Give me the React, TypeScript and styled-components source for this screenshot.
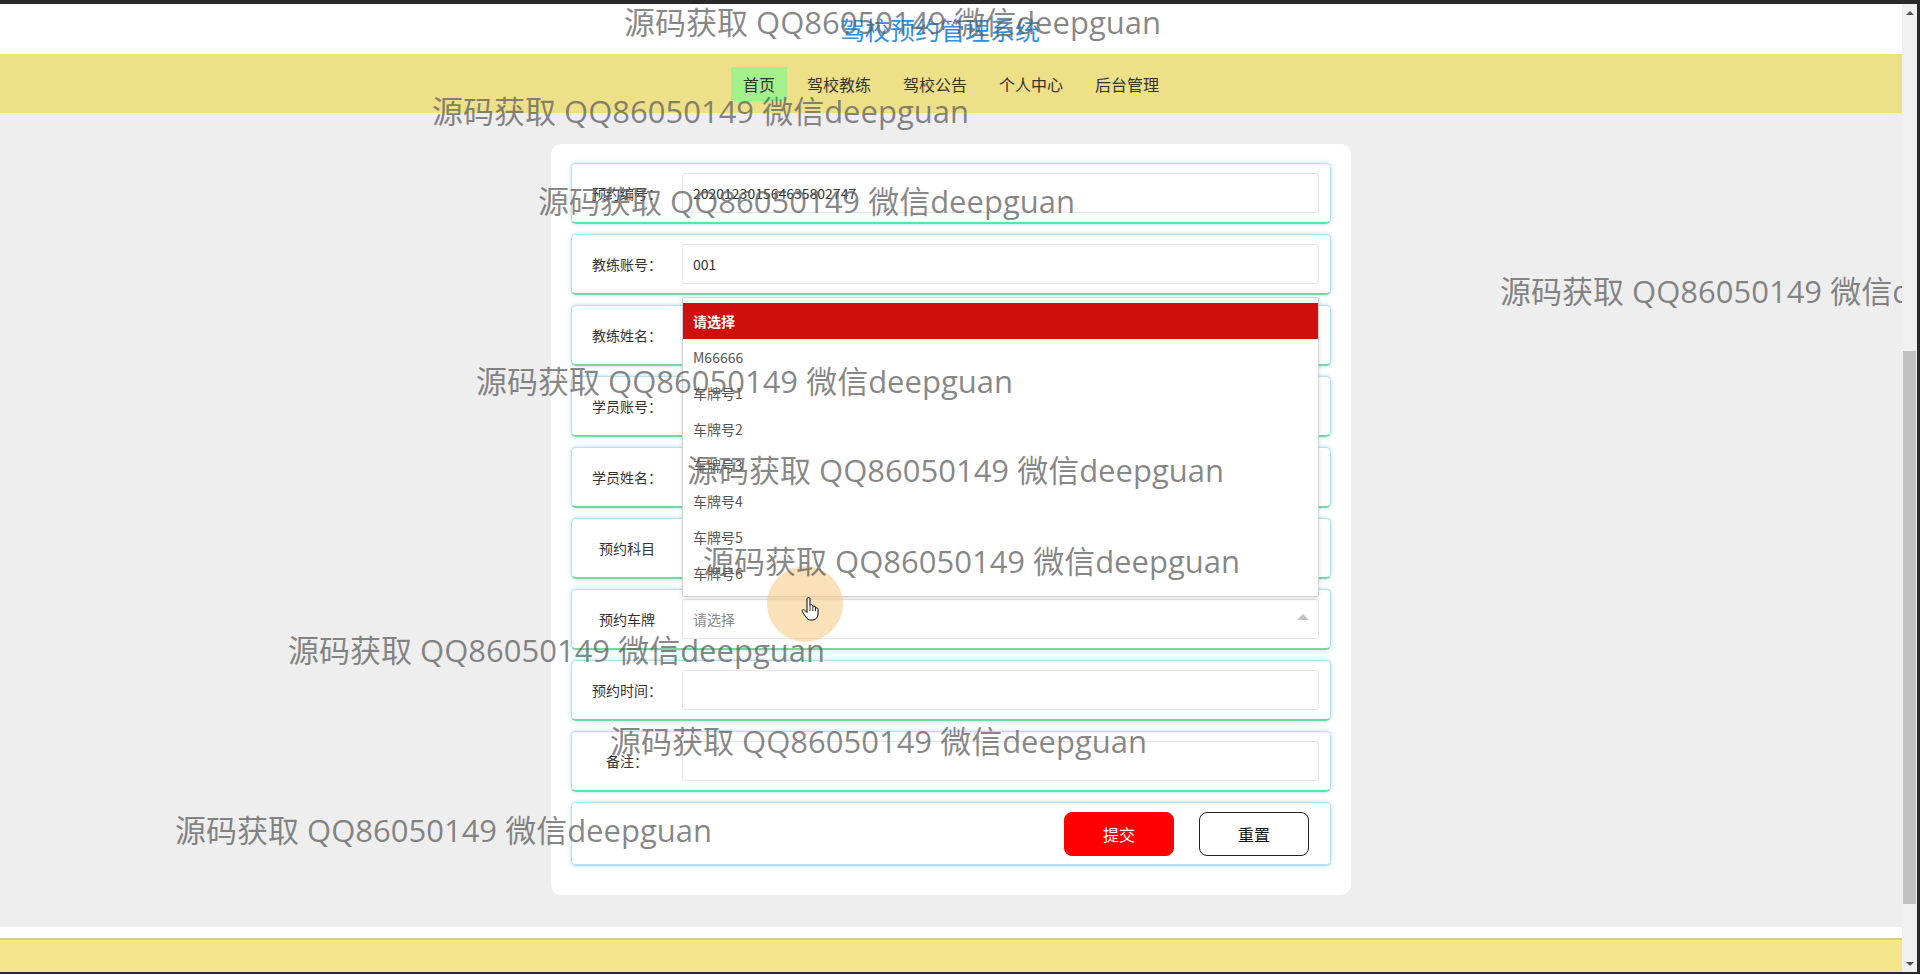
import React from 'react';
import styled, { createGlobalStyle } from 'styled-components';

const GlobalStyle = createGlobalStyle`
  html, body { margin: 0; padding: 0; height: 100%; overflow: hidden; }
  body { font-family: "Noto Sans CJK SC", "Noto Sans", sans-serif; background: #2a2a2a; }
  *, *::before, *::after { box-sizing: border-box; }
`;

const Frame = styled.div`
  height: 974px;
  display: flex;
  flex-direction: column;
  padding: 4px 0 2px;
  background: #2a2a2a;
`;

const Window = styled.div`
  flex: 1;
  display: flex;
  min-height: 0;
`;

const Page = styled.div`
  position: relative;
  flex: 1;
  display: flex;
  flex-direction: column;
  overflow: hidden;
  background: #eeeeee;
`;

const Header = styled.header`
  height: 50px;
  background: #fff;
  display: flex;
  justify-content: center;
  align-items: center;
`;

const Title = styled.h1`
  margin: 0 22px 0 0;
  font-size: 25px;
  font-weight: 400;
  line-height: 1;
  color: #2f8fe3;
`;

const Nav = styled.nav`
  height: 59px;
  background: #eedf89;
  display: flex;
  justify-content: center;
  align-items: center;
  gap: 8px;
`;

const NavItem = styled.a<{ $active?: boolean }>`
  padding: 0 12px;
  line-height: 34px;
  font-size: 16px;
  color: #333;
  text-decoration: none;
  background: ${p => (p.$active ? '#a4f08b' : 'transparent')};
`;

const Main = styled.main`
  flex: 1;
  display: flex;
  justify-content: center;
  align-items: flex-start;
  padding-top: 31px;
`;

const Card = styled.form`
  width: 800px;
  background: #fff;
  border-radius: 10px;
  padding: 19px 20px 29px;
  display: flex;
  flex-direction: column;
  gap: 10px;
`;

const Row = styled.div<{ $actions?: boolean }>`
  position: relative;
  height: ${p => (p.$actions ? 64 : 61)}px;
  display: flex;
  align-items: ${p => (p.$actions ? 'center' : 'flex-start')};
  justify-content: ${p => (p.$actions ? 'flex-end' : 'flex-start')};
  gap: ${p => (p.$actions ? '25px' : '0')};
  padding: ${p => (p.$actions ? '0 21px 0 0' : '9px 11px 0 0')};
  border: 1px solid #b6e1f3;
  border-bottom: 2px solid ${p => (p.$actions ? '#b6e1f3' : '#74d9a0')};
  border-radius: 5px;
  background: #fff;
  box-shadow: 0 0 4px rgba(120, 200, 235, 0.6);
`;

const FieldLabel = styled.label`
  width: 110px;
  flex: none;
  line-height: 40px;
  text-align: center;
  font-size: 14px;
  color: #333;
`;

const TextInput = styled.input`
  flex: 1;
  width: 100%;
  height: 40px;
  border: 1px solid #e6e6e6;
  border-radius: 3px;
  padding: 0 10px;
  font-family: inherit;
  font-size: 14px;
  color: #333;
  background: #fff;
  outline: none;
  &::placeholder { color: #888; }
`;

const SelectBox = styled.div`
  position: relative;
  flex: 1;
  display: flex;
`;

const SelectArrow = styled.span`
  position: absolute;
  right: 10px;
  top: 15px;
  width: 0;
  height: 0;
  border-left: 6px solid transparent;
  border-right: 6px solid transparent;
  border-bottom: 6px solid #c2c2c2;
`;

const Dropdown = styled.dl`
  position: absolute;
  left: 0;
  right: 0;
  bottom: 42px;
  margin: 0;
  padding: 5px 0;
  border: 1px solid #d2d2d2;
  border-radius: 2px;
  background: #fff;
  box-shadow: 0 2px 4px rgba(0, 0, 0, 0.12);
  z-index: 10;
`;

const Option = styled.dd<{ $selected?: boolean }>`
  margin: 0;
  padding: 0 10px;
  line-height: 36px;
  font-size: 14px;
  color: ${p => (p.$selected ? '#fff' : '#555')};
  font-weight: ${p => (p.$selected ? 700 : 400)};
  background: ${p => (p.$selected ? '#cf0f0c' : '#fff')};
`;

const Button = styled.button<{ $primary?: boolean }>`
  width: 110px;
  height: 44px;
  border-radius: 8px;
  font-family: inherit;
  font-size: 16px;
  cursor: pointer;
  color: ${p => (p.$primary ? '#fff' : '#111')};
  background: ${p => (p.$primary ? '#ff0000' : '#fff')};
  border: 1px solid ${p => (p.$primary ? '#ff0000' : '#222')};
`;

const FooterGap = styled.div`
  height: 11px;
  background: #fff;
`;

const FooterBar = styled.footer`
  height: 34px;
  background: #f5e68b;
  border-top: 2px solid #d5c99e;
`;

const Scrollbar = styled.div`
  width: 15px;
  flex: none;
  background: #f0f0f0;
  display: flex;
  flex-direction: column;
`;

const ScrollArrow = styled.div<{ $down?: boolean }>`
  height: 17px;
  flex: none;
  display: flex;
  justify-content: center;
  align-items: center;
  &::after {
    content: '';
    width: 0;
    height: 0;
    border-left: 4px solid transparent;
    border-right: 4px solid transparent;
    ${p => (p.$down ? 'border-top: 4px solid #505050;' : 'border-bottom: 4px solid #505050;')}
  }
`;

const ScrollTrack = styled.div`
  flex: 1;
  padding: 330px 1px 0 1px;
`;

const ScrollThumb = styled.div`
  height: 553px;
  background: #c1c1c1;
`;

const Edge = styled.div`
  width: 3px;
  flex: none;
  background: #2a2a2a;
`;

const Watermark = styled.span<{ $x: number; $y: number }>`
  position: absolute;
  left: ${p => p.$x}px;
  top: ${p => p.$y}px;
  font-family: "Open Sans", "Noto Sans CJK SC", sans-serif;
  font-size: 31px;
  line-height: 40px;
  color: rgba(95, 95, 95, 0.75);
  white-space: nowrap;
  pointer-events: none;
  z-index: 20;
`;

const Halo = styled.div`
  position: absolute;
  left: 767px;
  top: 562px;
  width: 76px;
  height: 76px;
  border-radius: 50%;
  background: rgba(247, 200, 130, 0.55);
  z-index: 15;
  pointer-events: none;
`;

const HandCursor = styled.svg`
  position: absolute;
  left: 801px;
  top: 593px;
  width: 18px;
  height: 24px;
  z-index: 16;
  pointer-events: none;
`;

const marks: [number, number][] = [
  [624, -2],
  [432, 87],
  [538, 177],
  [1500, 267],
  [476, 357],
  [687, 446],
  [703, 537],
  [288, 626],
  [610, 717],
  [175, 806],
];

const plates = ['M66666', '车牌号1', '车牌号2', '车牌号3', '车牌号4', '车牌号5', '车牌号6'];

const navItems = ['首页', '驾校教练', '驾校公告', '个人中心', '后台管理'];

export default function App() {
  return (
    <>
      <GlobalStyle />
      <Frame>
        <Window>
          <Page>
            <Header>
              <Title>驾校预约管理系统</Title>
            </Header>
            <Nav>
              {navItems.map((n, i) => (
                <NavItem key={n} $active={i === 0}>
                  {n}
                </NavItem>
              ))}
            </Nav>
            <Main>
              <Card onSubmit={e => e.preventDefault()}>
                <Row>
                  <FieldLabel>预约编号：</FieldLabel>
                  <TextInput readOnly value="202012301564635802747" />
                </Row>
                <Row>
                  <FieldLabel>教练账号：</FieldLabel>
                  <TextInput readOnly value="001" />
                </Row>
                <Row>
                  <FieldLabel>教练姓名：</FieldLabel>
                  <TextInput readOnly value="" />
                </Row>
                <Row>
                  <FieldLabel>学员账号：</FieldLabel>
                  <TextInput readOnly value="" />
                </Row>
                <Row>
                  <FieldLabel>学员姓名：</FieldLabel>
                  <TextInput readOnly value="" />
                </Row>
                <Row>
                  <FieldLabel>预约科目</FieldLabel>
                  <TextInput readOnly value="" />
                </Row>
                <Row>
                  <FieldLabel>预约车牌</FieldLabel>
                  <SelectBox>
                    <TextInput readOnly placeholder="请选择" value="" />
                    <SelectArrow />
                    <Dropdown>
                      <Option $selected>请选择</Option>
                      {plates.map(p => (
                        <Option key={p}>{p}</Option>
                      ))}
                    </Dropdown>
                  </SelectBox>
                </Row>
                <Row>
                  <FieldLabel>预约时间：</FieldLabel>
                  <TextInput readOnly value="" />
                </Row>
                <Row>
                  <FieldLabel>备注：</FieldLabel>
                  <TextInput readOnly value="" />
                </Row>
                <Row $actions>
                  <Button type="button" $primary>
                    提交
                  </Button>
                  <Button type="button">重置</Button>
                </Row>
              </Card>
            </Main>
            <FooterGap />
            <FooterBar />
            <Halo />
            <HandCursor viewBox="0 0 18 24">
              <path
                d="M6 2c0-.8.6-1.5 1.5-1.5S9 1.2 9 2v6.5c.3-.5.8-.8 1.4-.8.8 0 1.4.6 1.4 1.4v.6c.3-.4.8-.6 1.3-.6.8 0 1.4.6 1.4 1.4v.8c.3-.3.7-.5 1.1-.5.8 0 1.4.6 1.4 1.4V17c0 3.2-2 6-5.2 6H9.5c-2 0-3.2-1-4.2-2.4L1.4 14.8c-.5-.7-.3-1.6.4-2 .6-.4 1.4-.2 1.9.4L6 15.6Z"
                fill="#fff"
                stroke="#000"
                strokeWidth="1"
                strokeLinejoin="round"
              />
              <path d="M9 9v5M11.8 10v4M14.5 11v3" stroke="#000" strokeWidth="0.8" fill="none" />
            </HandCursor>
            {marks.map(([x, y], i) => (
              <Watermark key={i} $x={x} $y={y}>
                源码获取 QQ86050149 微信deepguan
              </Watermark>
            ))}
          </Page>
          <Scrollbar>
            <ScrollArrow />
            <ScrollTrack>
              <ScrollThumb />
            </ScrollTrack>
            <ScrollArrow $down />
          </Scrollbar>
          <Edge />
        </Window>
      </Frame>
    </>
  );
}
